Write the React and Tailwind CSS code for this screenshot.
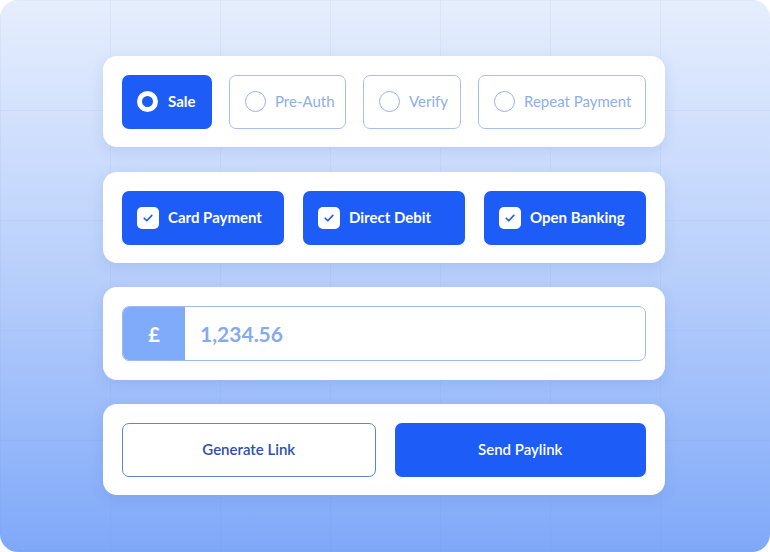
import React from 'react';

const font = { fontFamily: 'Lato, "Noto Sans", sans-serif' };

function Check() {
  return (
    <span className="flex h-[22px] w-[22px] items-center justify-center rounded-[5px] bg-white">
      <svg width="12" height="12" viewBox="0 0 12 12" fill="none">
        <path d="M2.2 6.2 L4.8 8.8 L9.8 3.4" stroke="#1e5bf5" strokeWidth="1.6" strokeLinecap="round" strokeLinejoin="round" />
      </svg>
    </span>
  );
}

const modes = [
  { label: 'Sale', w: 'w-[90px]', active: true },
  { label: 'Pre-Auth', w: 'w-[117px]' },
  { label: 'Verify', w: 'w-[98px]' },
  { label: 'Repeat Payment', w: 'w-[168px]' },
];

const methods = ['Card Payment', 'Direct Debit', 'Open Banking'];

function Card({ children, className = '' }) {
  return (
    <div className={`rounded-[14px] bg-white px-[19px] shadow-[0_4px_14px_rgba(40,80,180,0.12)] ${className}`}>
      {children}
    </div>
  );
}

export default function App() {
  return (
    <div className="relative h-[552px] w-[770px] overflow-hidden rounded-[18px] bg-gradient-to-b from-[#e6eefd] via-[#b8cffb] to-[#7fa8f8]" style={font}>
      <div className="absolute inset-0 bg-[linear-gradient(to_right,rgba(90,130,220,0.07)_1px,transparent_1px),linear-gradient(to_bottom,rgba(90,130,220,0.07)_1px,transparent_1px)] bg-[size:110px_110px]" />
      <div className="relative ml-[103px] flex w-[562px] flex-col gap-[24px] pt-[56px]">
        <Card className="mb-[1px] flex h-[91px] items-center gap-[17px]">
          {modes.map((m) =>
            m.active ? (
              <div key={m.label} className={`${m.w} flex h-[54px] items-center gap-[10px] rounded-[7px] bg-[#1e5cf8] pl-[15px] text-[15px] font-bold text-white`}>
                <span className="h-[21px] w-[21px] rounded-full border-[5px] border-white" />
                {m.label}
              </div>
            ) : (
              <div key={m.label} className={`${m.w} flex h-[54px] items-center gap-[9px] rounded-[7px] border border-[#a6bff0] pl-[15px] text-[15px] text-[#8eaeea]`}>
                <span className="h-[21px] w-[21px] rounded-full border border-[#94b2ea]" />
                {m.label}
              </div>
            )
          )}
        </Card>

        <Card className="flex h-[91px] items-center gap-[19px]">
          {methods.map((m) => (
            <div key={m} className="flex h-[54px] flex-1 items-center gap-[9px] rounded-[7px] bg-[#1e5cf8] pl-[15px] text-[15px] font-bold text-white">
              <Check />
              {m}
            </div>
          ))}
        </Card>

        <Card className="flex h-[93px] items-center">
          <div className="flex h-[55px] w-full overflow-hidden rounded-[7px] border border-[#9fbaec]">
            <div className="flex w-[62px] items-center justify-center bg-[#80abfa] text-[20px] font-bold text-white">£</div>
            <div className="flex flex-1 items-center pl-[15px] text-[21px] font-bold text-[#86aaee]">1,234.56</div>
          </div>
        </Card>

        <Card className="flex h-[91px] items-center gap-[19px]">
          <div className="flex h-[54px] flex-1 items-center justify-center rounded-[7px] border border-[#5e84d8] text-[15px] font-semibold text-[#2c4fb0]">
            Generate Link
          </div>
          <div className="flex h-[54px] flex-1 items-center justify-center rounded-[7px] bg-[#1e5cf8] text-[15px] font-semibold text-white">
            Send Paylink
          </div>
        </Card>
      </div>
    </div>
  );
}
